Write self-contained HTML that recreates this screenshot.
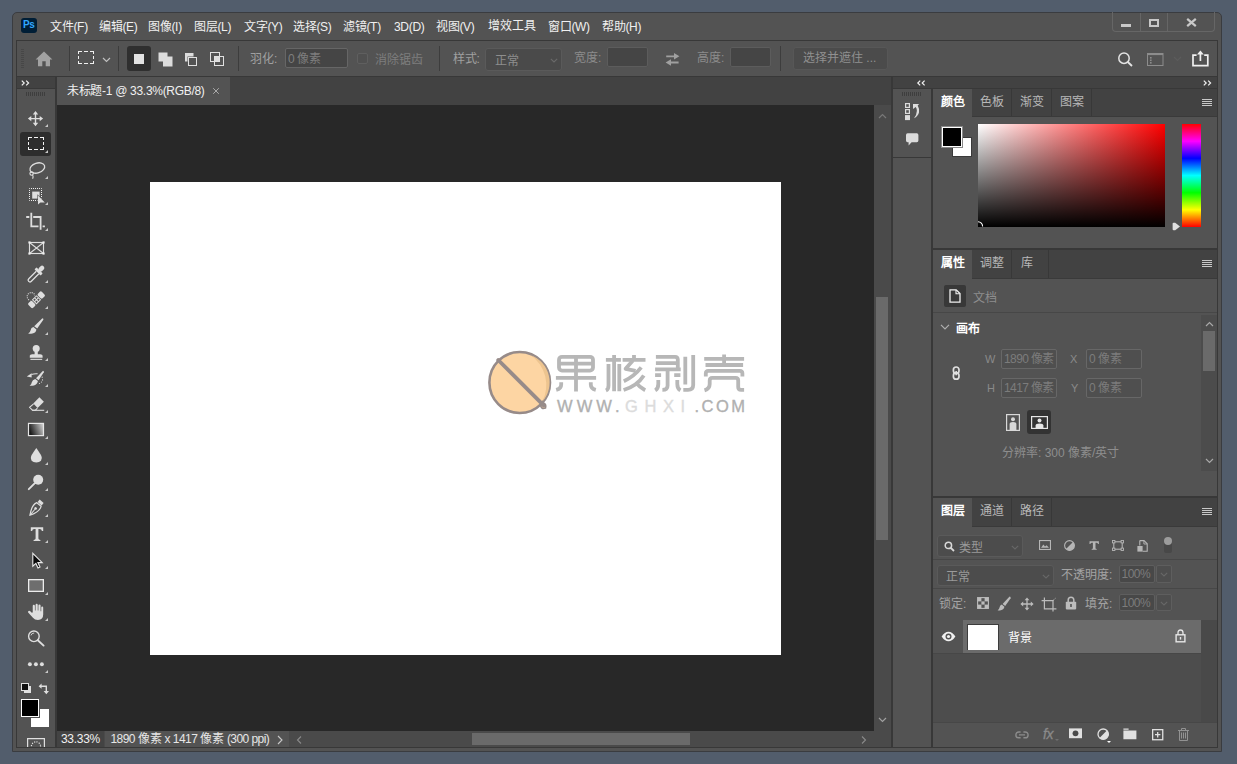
<!DOCTYPE html>
<html lang="zh-CN">
<head>
<meta charset="utf-8">
<title>Photoshop</title>
<style>
*{box-sizing:border-box;margin:0;padding:0}
html,body{width:1237px;height:764px;overflow:hidden}
body{background:#525d6c;font-family:"Liberation Sans",sans-serif;font-size:12px;color:#dddddd;position:relative}
.abs,.win *{position:absolute}
.win{position:absolute;left:12px;top:12px;width:1210px;height:740px;background:#535353;border:1px solid #3a3c40;border-radius:5px 5px 0 0}
/* coordinates inside .inner are page coordinates */
.inner{left:-13px;top:-13px;width:1237px;height:764px}
.t{white-space:nowrap;line-height:14px;height:14px}
.dk{background:#383838}
svg{overflow:visible}
/* menu */
.menu .t{color:#f0f0f0;letter-spacing:-0.3px}
/* options bar */
.opt{left:17px;top:41px;width:1200.2px;height:35px;background:#535353}
.lbl{color:#a0a0a0}
.dis{color:#7e7e7e}
.field{background:#454545;border:1px solid #666666;border-radius:2px}
.vsep{width:1px;background:#3d3d3d;top:46px;height:25px}
/* panels */
.tabbar{background:#424242}
.ptabs::after{content:"";position:absolute;left:39px;right:0;bottom:0;height:1px;background:#3a3a3a}
.tab{top:0;height:100%;color:#b8b8b8;text-align:center;line-height:27px;border-right:1px solid #383838}
.tab.on{background:#535353;color:#ffffff;font-weight:bold;border-right:none}
.panel{background:#535353}
.tool{left:26px;width:20px;height:20px}
.corner{width:0;height:0;border-left:3px solid transparent;border-bottom:3px solid #c8c8c8}
</style>
</head>
<body>
<div class="win"><div class="inner">

<!-- ===== MENU BAR ===== -->
<div class="menu" id="menubar" style="left:13px;top:13px;width:1209px;height:27px">
  <!-- Ps logo -->
  <div style="left:8px;top:4.8px;width:16.2px;height:15.2px;background:#001e36;border-radius:3px"></div>
  <div class="t" style="left:10px;top:5.4px;font-size:10px;font-weight:bold;color:#31a8ff;letter-spacing:-0.3px">Ps</div>
  <div class="t" style="left:37px;top:7px">文件(F)</div>
  <div class="t" style="left:86px;top:7px">编辑(E)</div>
  <div class="t" style="left:135px;top:7px">图像(I)</div>
  <div class="t" style="left:181px;top:7px">图层(L)</div>
  <div class="t" style="left:231px;top:7px">文字(Y)</div>
  <div class="t" style="left:280px;top:7px">选择(S)</div>
  <div class="t" style="left:330px;top:7px">滤镜(T)</div>
  <div class="t" style="left:381px;top:7px">3D(D)</div>
  <div class="t" style="left:423px;top:7px">视图(V)</div>
  <div class="t" style="left:475px;top:6px;letter-spacing:0.15px">增效工具</div>
  <div class="t" style="left:535px;top:7px">窗口(W)</div>
  <div class="t" style="left:589px;top:7px">帮助(H)</div>
  <!-- window buttons -->
  <div style="left:1099px;top:-1px;width:103px;height:20px;border:1px solid #666666;border-top:none;border-radius:0 0 4px 4px"></div>
  <div style="left:1127px;top:0;width:1px;height:18px;background:#666666"></div>
  <div style="left:1154px;top:0;width:1px;height:18px;background:#666666"></div>
  <div style="left:1108px;top:11px;width:10px;height:3px;background:#c8c8c8"></div>
  <div style="left:1136px;top:6px;width:10px;height:8px;border:2px solid #c8c8c8"></div>
  <svg style="left:1172.5px;top:5px" width="11" height="9" viewBox="0 0 11 9"><path d="M1.2 0.8 L9.8 8.2 M9.8 0.8 L1.2 8.2" stroke="#c8c8c8" stroke-width="2.2" fill="none"/></svg>
</div>

<!-- ===== OPTIONS BAR ===== -->
<div class="dk" style="left:16.3px;top:40px;width:1201.7px;height:707.8px"></div>
<div class="opt" id="optbar">
  <!-- coordinates relative to (17,41) -->
  <div style="left:4px;top:8px;width:3px;height:19px;background:repeating-linear-gradient(to bottom,#474747 0 1px,transparent 1px 2px)"></div>
  <!-- home -->
  <svg style="left:18px;top:10px" width="18" height="16" viewBox="0 0 18 16"><path d="M9 0.6 L0.6 8.6 H3 V15.2 H7.3 V10.2 H10.7 V15.2 H15 V8.6 H17.4 Z" fill="#a2a2a2"/></svg>
  <div class="vsep" style="left:52px;top:5px"></div>
  <!-- marquee icon -->
  <svg style="left:61px;top:10px" width="16" height="13" viewBox="0 0 16 13"><path d="M0 0.5 H4 M6 0.5 H10 M12 0.5 H16 M0 12.5 H4 M6 12.5 H10 M12 12.5 H16 M0.5 0 V3 M0.5 5 V8 M0.5 10 V13 M15.5 0 V3 M15.5 5 V8 M15.5 10 V13" fill="none" stroke="#f0f0f0" stroke-width="1"/></svg>
  <svg style="left:85px;top:16px" width="9" height="6" viewBox="0 0 9 6"><path d="M1 1 L4.5 4.5 L8 1" stroke="#c0c0c0" stroke-width="1.2" fill="none"/></svg>
  <div class="vsep" style="left:101px;top:5px"></div>
  <!-- selection mode buttons -->
  <div style="left:110px;top:5px;width:24px;height:25px;background:#2f2f2f;border-radius:3px"></div>
  <div style="left:117px;top:13px;width:10px;height:10px;background:#e2e2e2"></div>
  <svg style="left:141px;top:10.5px" width="15" height="15" viewBox="0 0 15 15"><path d="M0.5 0.5 H9.5 V4.5 H14.5 V14.5 H5 V9.5 H0.5 Z" fill="#dcdcdc"/></svg>
  <svg style="left:168px;top:12px" width="13" height="14" viewBox="0 0 13 14"><path d="M0 0 H8.5 V3.5 H2.5 V8.5 H0 Z" fill="#dcdcdc"/><rect x="3.5" y="4.5" width="8" height="8" fill="none" stroke="#e0e0e0" stroke-width="1"/></svg>
  <svg style="left:193px;top:11px" width="14" height="14" viewBox="0 0 14 14"><rect x="0.5" y="0.5" width="9" height="9" fill="none" stroke="#e0e0e0" stroke-width="1"/><rect x="4.5" y="4.5" width="9" height="9" fill="none" stroke="#e0e0e0" stroke-width="1"/><rect x="5" y="5" width="4" height="4" fill="#dcdcdc"/></svg>
  <div class="vsep" style="left:221px;top:5px"></div>
  <div class="t lbl" style="left:233px;top:11px">羽化:</div>
  <div class="field" style="left:268px;top:6.5px;width:63px;height:20.5px"></div>
  <div class="t dis" style="left:271px;top:10.5px;letter-spacing:-0.4px">0 像素</div>
  <div style="left:340px;top:12px;width:11px;height:11px;border:1px solid #5f5f5f;border-radius:2px;background:#505050"></div>
  <div class="t dis" style="left:357.5px;top:12px">消除锯齿</div>
  <div class="vsep" style="left:422px;top:5px"></div>
  <div class="t lbl" style="left:435.5px;top:11px">样式:</div>
  <div style="left:468px;top:6.5px;width:77px;height:23px;background:#4a4a4a;border:1px solid #5a5a5a;border-radius:3px"></div>
  <div class="t dis" style="left:478px;top:13px;color:#8e8e8e">正常</div>
  <svg style="left:533px;top:17px" width="8" height="5" viewBox="0 0 8 5"><path d="M0.8 0.8 L4 4 L7.2 0.8" stroke="#6a6a6a" stroke-width="1.1" fill="none"/></svg>
  <div class="t dis" style="left:557px;top:10px;color:#8c8c8c">宽度:</div>
  <div class="field" style="left:590px;top:6px;width:41px;height:20px;border-color:#5c5c5c"></div>
  <svg style="left:647.5px;top:11.5px" width="15" height="13" viewBox="0 0 15 13"><path d="M1.2 2.4 H9 V0 L14.4 3.3 L9 6.6 V4.2 H1.2 Z" fill="#a0a0a0"/><path d="M13.6 8.6 H6 V6.2 L0.6 9.5 L6 12.8 V10.4 H13.6 Z" fill="#a0a0a0"/></svg>
  <div class="t dis" style="left:680px;top:10px;color:#8c8c8c">高度:</div>
  <div class="field" style="left:713px;top:6px;width:41px;height:20px;border-color:#5c5c5c"></div>
  <div class="vsep" style="left:763px;top:5px"></div>
  <div style="left:776px;top:5.5px;width:95px;height:23px;background:#4b4b4b;border:1px solid #575757;border-radius:3px"></div>
  <div class="t" style="left:786px;top:10px;color:#909090">选择并遮住 ...</div>
  <!-- right icons -->
  <svg style="left:1100px;top:10px" width="16" height="16" viewBox="0 0 16 16"><circle cx="7" cy="7.2" r="5.2" fill="none" stroke="#e4e4e4" stroke-width="1.5"/><path d="M10.8 11 L15 15" stroke="#e4e4e4" stroke-width="1.8"/></svg>
  <svg style="left:1130px;top:12px" width="17" height="13" viewBox="0 0 17 13"><rect x="0.5" y="0.5" width="15.5" height="12" fill="none" stroke="#8c8c8c" stroke-width="1"/><rect x="0.5" y="0.5" width="15.5" height="1.6" fill="#8c8c8c"/><rect x="3" y="4" width="1.6" height="1.6" fill="#8c8c8c"/><rect x="3" y="6.5" width="1.6" height="1.6" fill="#8c8c8c"/><rect x="3" y="9" width="1.6" height="1.6" fill="#8c8c8c"/></svg>
  <svg style="left:1156px;top:15px" width="9" height="6" viewBox="0 0 9 6"><path d="M1 1 L4.5 4.5 L8 1" stroke="#5c5c5c" stroke-width="1.2" fill="none"/></svg>
  <svg style="left:1175px;top:9px" width="17" height="17" viewBox="0 0 17 17"><path d="M4.6 5.2 H1 V15.6 H15.8 V5.2 H12.2" fill="none" stroke="#f0f0f0" stroke-width="1.7"/><path d="M8.4 11 V2.5" stroke="#f0f0f0" stroke-width="1.7"/><path d="M5 4.4 L8.4 0.6 L11.8 4.4 Z" fill="#f0f0f0"/></svg>
</div>

<!-- ===== TOOLBAR ===== -->
<div id="toolbar">
  <div style="left:17px;top:77px;width:38px;height:11px;background:#424242"></div>
  <svg style="left:21px;top:80px" width="9" height="6" viewBox="0 0 9 6"><path d="M0.8 0.6 L3.2 3 L0.8 5.4 M5.2 0.6 L7.6 3 L5.2 5.4" stroke="#f0f0f0" stroke-width="1.2" fill="none"/></svg>
  <div class="panel" style="left:17px;top:89px;width:38px;height:658px"></div>
  <div style="left:26px;top:92px;width:19px;height:4px;background:repeating-linear-gradient(to right,#3e3e3e 0 1px,transparent 1px 2px)"></div>
  <!-- active tool bg -->
  <div style="left:20px;top:132px;width:31px;height:24px;background:#2d2d2d;border-radius:3px"></div>
  <!--TOOLS_BEGIN-->
  <svg class="tool" style="top:108px" width="20" height="20" viewBox="0 0 20 20"><path d="M9.5 3 L12.2 6.4 H6.8 Z M9.5 18.2 L12.2 14.8 H6.8 Z M1.9 10.6 L5.3 7.9 V13.3 Z M17.1 10.6 L13.7 7.9 V13.3 Z" fill="#dedede"/><path d="M9.5 5.5 V15.7 M4.4 10.6 H14.6" stroke="#dedede" stroke-width="1.4" fill="none"/></svg><div class="corner" style="left:45px;top:124px"></div>
  <svg class="tool" style="top:134px" width="20" height="20" viewBox="0 0 20 20"><path transform="translate(2 3)" d="M0 0.5 H4 M6 0.5 H10 M12 0.5 H16 M0 12.5 H4 M6 12.5 H10 M12 12.5 H16 M0.5 0 V3 M0.5 5 V8 M0.5 10 V13 M15.5 0 V3 M15.5 5 V8 M15.5 10 V13" fill="none" stroke="#f4f4f4" stroke-width="1"/></svg><div class="corner" style="left:45px;top:150px"></div>
  <svg class="tool" style="top:160px" width="20" height="20" viewBox="0 0 20 20"><ellipse cx="11.3" cy="8" rx="7.6" ry="4.9" transform="rotate(-18 11.3 8)" fill="none" stroke="#dedede" stroke-width="1.3"/><circle cx="5.6" cy="13.6" r="1.7" fill="none" stroke="#dedede" stroke-width="1.1"/><path d="M6.6 15 Q7.6 16.8 6.6 18.8" fill="none" stroke="#dedede" stroke-width="1.1"/></svg><div class="corner" style="left:45px;top:176px"></div>
  <svg class="tool" style="top:186px" width="20" height="20" viewBox="0 0 20 20"><rect x="3.5" y="2.5" width="12" height="12" fill="none" stroke="#f0f0f0" stroke-width="1" stroke-dasharray="1 1" stroke-dashoffset="0.5"/><rect x="6.2" y="5.6" width="7.4" height="7" fill="#dedede"/><path d="M12 9.6 L12 18.6 L14.4 16.4 L18.8 16.4 Z" fill="#dedede" stroke="#535353" stroke-width="1.2" paint-order="stroke"/></svg><div class="corner" style="left:45px;top:202px"></div>
  <svg class="tool" style="top:212px" width="20" height="20" viewBox="0 0 20 20"><path d="M0.2 5 H3.3 M7.2 5 H14.6 V17.8 M5.3 0.8 V14.4 H12.5 M16.6 14.4 H18.9" fill="none" stroke="#dedede" stroke-width="1.8"/></svg><div class="corner" style="left:45px;top:228px"></div>
  <svg class="tool" style="top:238px" width="20" height="20" viewBox="0 0 20 20"><rect x="3.5" y="4.5" width="14" height="11" fill="none" stroke="#dedede" stroke-width="1.15"/><path d="M3.5 4.5 L17.5 15.5 M17.5 4.5 L3.5 15.5" stroke="#dedede" stroke-width="1.05"/><rect x="2.4" y="3.4" width="2.1" height="2.1" fill="#f0f0f0"/><rect x="16.5" y="3.4" width="2.1" height="2.1" fill="#f0f0f0"/><rect x="2.4" y="14.5" width="2.1" height="2.1" fill="#f0f0f0"/><rect x="16.5" y="14.5" width="2.1" height="2.1" fill="#f0f0f0"/></svg>
  <svg class="tool" style="top:264px" width="20" height="20" viewBox="0 0 20 20"><g transform="rotate(45 10 10)"><rect x="7.8" y="-0.8" width="4.4" height="6.4" rx="2.1" fill="#dedede"/><rect x="5.7" y="4.9" width="8.6" height="2.9" rx="0.5" fill="#dedede"/><path d="M8.2 7.8 V18.4 Q8.2 20.4 10 20.4 Q11.8 20.4 11.8 18.4 V7.8" fill="none" stroke="#dedede" stroke-width="1.3"/></g></svg><div class="corner" style="left:45px;top:280px"></div>
  <svg class="tool" style="top:290px" width="20" height="20" viewBox="0 0 20 20"><circle cx="5.2" cy="6.6" r="4" fill="none" stroke="#dedede" stroke-width="1.1" stroke-dasharray="1 1.1"/><g transform="translate(-0.5 -1.2) rotate(-45 11 11)"><rect x="0.8" y="7" width="20.4" height="8" fill="#535353"/><rect x="1.6" y="7.7" width="5.4" height="6.6" rx="1.4" fill="#dedede"/><rect x="15" y="7.7" width="5.4" height="6.6" rx="1.4" fill="#dedede"/><rect x="7.7" y="7.7" width="6.6" height="6.6" fill="#dedede"/><rect x="8.7" y="8.7" width="1.8" height="1.8" fill="#535353"/><rect x="11.5" y="8.7" width="1.8" height="1.8" fill="#535353"/><rect x="8.7" y="11.5" width="1.8" height="1.8" fill="#535353"/><rect x="11.5" y="11.5" width="1.8" height="1.8" fill="#535353"/></g></svg><div class="corner" style="left:45px;top:306px"></div>
  <svg class="tool" style="top:316px" width="20" height="20" viewBox="0 0 20 20"><path d="M16.4 2.2 Q17.8 2.4 17.3 3.8 L11.2 12.6 L8.2 10.2 Z" fill="#dedede"/><path d="M7.4 10.9 L10.4 13.4 Q10 16.8 6.4 17.5 Q4 18 2.2 17.6 Q4.4 16.2 4.6 14.2 Q5 11.4 7.4 10.9 Z" fill="#dedede"/></svg><div class="corner" style="left:45px;top:332px"></div>
  <svg class="tool" style="top:342px" width="20" height="20" viewBox="0 0 20 20"><circle cx="10.2" cy="6.4" r="3.5" fill="#dedede"/><rect x="8.6" y="8.6" width="3.2" height="4.4" fill="#dedede"/><path d="M6.2 12.2 H14.2 Q16.6 12.2 16.6 13.8 V15.7 H3.8 V13.8 Q3.8 12.2 6.2 12.2 Z" fill="#dedede"/><rect x="4.4" y="16.8" width="11.8" height="1.1" fill="#dedede"/></svg><div class="corner" style="left:45px;top:358px"></div>
  <svg class="tool" style="top:368px" width="20" height="20" viewBox="0 0 20 20"><path d="M17 2.8 Q18.2 3 17.8 4.2 L12.6 12.2 L10 10.2 Z" fill="#dedede"/><path d="M9.2 10.9 L11.9 13 Q11.4 16.4 8 17.4 Q5.6 18 3.6 17.8 Q5.6 16.2 5.8 14.2 Q6.4 11.6 9.2 10.9 Z" fill="#dedede"/><path d="M0.8 8.4 L5.6 5.2 V9.4 Z" fill="#dedede"/><path d="M5.4 6.6 Q8.4 5.4 11.6 5.8" fill="none" stroke="#dedede" stroke-width="1.1"/><circle cx="16.2" cy="9.2" r="0.6" fill="#dedede"/><circle cx="16.5" cy="11.9" r="0.6" fill="#dedede"/><circle cx="15.5" cy="14" r="0.6" fill="#dedede"/><circle cx="13.5" cy="15.5" r="0.6" fill="#dedede"/></svg><div class="corner" style="left:45px;top:384px"></div>
  <svg class="tool" style="top:394px" width="20" height="20" viewBox="0 0 20 20"><path d="M13.4 3.3 L17.9 7.8 L11.6 13.9 L7.3 9.6 Z" fill="#dedede"/><path d="M7.6 9.9 L3.6 13.3 L6.4 16.2 H9.4 L11.4 14.2" fill="none" stroke="#dedede" stroke-width="1.1"/><path d="M6.2 16.3 H18.2" stroke="#dedede" stroke-width="1.1"/></svg><div class="corner" style="left:45px;top:410px"></div>
  <svg class="tool" style="top:420px" width="20" height="20" viewBox="0 0 20 20"><defs><linearGradient id="gr" x1="0" y1="0.3" x2="1" y2="0"><stop offset="0" stop-color="#1c1c1c"/><stop offset="1" stop-color="#d8d8d8"/></linearGradient></defs><rect x="2.5" y="3.4" width="15" height="12.2" fill="url(#gr)" stroke="#e6e6e6" stroke-width="1.2"/></svg><div class="corner" style="left:45px;top:436px"></div>
  <svg class="tool" style="top:446px" width="20" height="20" viewBox="0 0 20 20"><path d="M10.3 2 Q14.2 7.6 15.4 10 Q16.6 12.6 15 14.8 Q13.4 16.6 10.3 16.6 Q7.2 16.6 5.6 14.8 Q4 12.6 5.2 10 Q6.4 7.6 10.3 2 Z" fill="#dedede"/></svg><div class="corner" style="left:45px;top:462px"></div>
  <svg class="tool" style="top:472px" width="20" height="20" viewBox="0 0 20 20"><circle cx="12.2" cy="7.8" r="5" fill="#dedede"/><path d="M8.6 11.4 L2.8 17.2" stroke="#dedede" stroke-width="1.9" stroke-linecap="round"/></svg><div class="corner" style="left:45px;top:488px"></div>
  <svg class="tool" style="top:498px" width="20" height="20" viewBox="0 0 20 20"><g transform="rotate(40 10 10)"><path d="M7.4 1.2 H12.6 V4.4 H7.4 Z" fill="#dedede"/><path d="M7.2 5.4 H12.8 Q15.4 10.4 10 19.4 Q4.6 10.4 7.2 5.4 Z" fill="none" stroke="#dedede" stroke-width="1.2"/><path d="M10 18.6 V11.6" stroke="#dedede" stroke-width="1"/><circle cx="10" cy="10.6" r="1.3" fill="#dedede"/></g></svg><div class="corner" style="left:45px;top:514px"></div>
  <svg class="tool" style="top:524px" width="20" height="20" viewBox="0 0 20 20"><path d="M4.8 3.2 H17.2 V7 H15.9 Q15.7 4.9 13.6 4.9 H12.4 V14.6 Q12.4 15.8 14.4 15.9 V17 H7.6 V15.9 Q9.6 15.8 9.6 14.6 V4.9 H8.4 Q6.3 4.9 6.1 7 H4.8 Z" fill="#dedede"/></svg><div class="corner" style="left:45px;top:540px"></div>
  <svg class="tool" style="top:550px" width="20" height="20" viewBox="0 0 20 20"><path d="M6.8 3.4 V16.2 L9.9 13.4 L12 18 L14 17.1 L11.9 12.6 H16.2 Z" fill="#0a0a0a" stroke="#e8e8e8" stroke-width="1.1" stroke-linejoin="miter"/></svg><div class="corner" style="left:45px;top:566px"></div>
  <svg class="tool" style="top:576px" width="20" height="20" viewBox="0 0 20 20"><rect x="2.65" y="3.65" width="14.7" height="11.7" fill="#6e6e6e" stroke="#ececec" stroke-width="1.3"/></svg><div class="corner" style="left:45px;top:592px"></div>
  <svg class="tool" style="top:602px" width="20" height="20" viewBox="0 0 20 20"><path transform="translate(-0.9 0) scale(1.09 1)" d="M7 10 V4 Q7 2.8 8 2.8 Q9 2.8 9 4 V8.6 H9.6 V2.9 Q9.6 1.8 10.6 1.8 Q11.6 1.8 11.6 2.9 V8.6 H12.2 V3.6 Q12.2 2.6 13.2 2.6 Q14.2 2.6 14.2 3.6 V9.2 H14.8 V5.6 Q14.8 4.6 15.7 4.6 Q16.6 4.6 16.6 5.6 V12.6 Q16.6 18 11.8 18 Q8.8 18 7.2 15.8 L2.8 10.4 Q2.2 9.4 3.2 8.9 Q4.2 8.6 5 9.4 L6.4 11 Z" fill="#dedede"/></svg><div class="corner" style="left:45px;top:618px"></div>
  <svg class="tool" style="top:628px" width="20" height="20" viewBox="0 0 20 20"><circle cx="7.9" cy="8.3" r="5.3" fill="none" stroke="#dedede" stroke-width="1.4"/><path d="M11.8 12.2 L17.6 17.6" stroke="#dedede" stroke-width="1.9" stroke-linecap="round"/><path d="M5 7.4 A3.2 3.2 0 0 1 8.2 5" fill="none" stroke="#dedede" stroke-width="0.9"/></svg>
  <svg class="tool" style="top:654px" width="20" height="20" viewBox="0 0 20 20"><circle cx="3.9" cy="10.2" r="1.95" fill="#dedede"/><circle cx="9.9" cy="10.2" r="1.95" fill="#dedede"/><circle cx="15.9" cy="10.2" r="1.95" fill="#dedede"/></svg><div class="corner" style="left:45px;top:670px"></div>
  <div style="left:24px;top:686px;width:7px;height:7px;background:#e0e0e0"></div><div style="left:21px;top:683px;width:8px;height:8px;background:#101010;border:1px solid #e0e0e0"></div>
  <svg style="left:37.5px;top:682.5px" width="12" height="12" viewBox="0 0 12 12"><path d="M0.6 3.2 L3.6 0.6 V2.5 H9 V8 H11 L8.3 11.2 L5.6 8 H7.6 V3.9 H3.6 V5.8 Z" fill="#dedede"/></svg>
  <div style="left:31px;top:709px;width:18px;height:18px;background:#ffffff"></div>
  <div style="left:20.6px;top:698.8px;width:18.6px;height:18.4px;background:#000000;border:1px solid #ffffff;box-shadow:0 0 0 1px #535353"></div>
  <svg style="left:27px;top:737.8px;overflow:hidden" width="18" height="9.2" viewBox="0 0 18 9.2"><path d="M0.6 10 V0.6 H17.4 V10" fill="none" stroke="#e0e0e0" stroke-width="1.2"/><circle cx="9" cy="8.4" r="4.6" fill="none" stroke="#e8e8e8" stroke-width="1.2" stroke-dasharray="1.1 1.3"/></svg>
  <!--TOOLS_END-->
</div>

<!-- ===== DOCUMENT ===== -->
<div id="doc">
  <!-- tab bar -->
  <div class="tabbar" style="left:57px;top:77px;width:834px;height:28.2px"></div>
  <div class="panel" style="left:57px;top:77px;width:173px;height:28.2px"></div>
  <div class="t" style="left:67px;top:84px;color:#f0f0f0;letter-spacing:-0.3px">未标题-1 @ 33.3%(RGB/8)</div>
  <svg style="left:212px;top:87.3px" width="8" height="8" viewBox="0 0 8 8"><path d="M1.2 1.2 L6.8 6.8 M6.8 1.2 L1.2 6.8" stroke="#b4b4b4" stroke-width="0.9" fill="none"/></svg>
  <!-- viewport -->
  <div style="left:57px;top:105.2px;width:817px;height:625.8px;background:#282828"></div>
  <div style="left:150px;top:182px;width:631px;height:473px;background:#ffffff"></div>
  <svg style="left:480px;top:340px" width="280" height="85" viewBox="480 340 280 85">
    <!-- fruit -->
    <path d="M542.6 402.6 Q546.6 403.6 545.4 408 Q541 409.6 540.6 405 Z" fill="#fdd5a3" stroke="#978b89" stroke-width="1.8" stroke-linejoin="round"/>
    <ellipse cx="519.7" cy="382.5" rx="30.3" ry="30.5" fill="#fdd5a3" stroke="#978b89" stroke-width="2.6"/>
    <path d="M531 355.2 A29.2 29.2 0 0 1 542.5 401.5 A37 37 0 0 0 531 355.2 Z" fill="#edc48f"/>
    <path d="M498.2 360 L543.6 405.4" stroke="#978b89" stroke-width="3.8" stroke-linecap="round"/>
    <g fill="none" stroke="#b7b7b7" stroke-width="3.8" stroke-linejoin="round">
      <!-- 果 -->
      <rect x="559" y="356.8" width="34" height="13.8" rx="3"/>
      <path d="M559 363.7 H593 M576 355 V391.4 M555.9 377.8 H596.1"/>
      <path d="M561.2 382.2 V384.4 Q561.2 388.6 556.2 389.9 M590.8 382.2 V384.4 Q590.8 388.6 595.8 389.9"/>
      <!-- 核 -->
      <path d="M605.9 359.8 H620.9 M614.1 354.9 V391.3 M619.3 364 V391.3 M608.5 364 V385.4 Q608.5 389.4 605.9 390.6"/>
      <path d="M634 354.9 V359 M622.6 359.8 H645.5"/>
      <path d="M632.9 360.6 L625.6 368.8 L635.6 370.9"/>
      <path d="M641.2 367.4 Q634 376.6 623.8 381.2"/>
      <path d="M643.8 375.4 Q637.4 385.6 623.6 390"/>
      <path d="M635.7 382.4 Q639.6 387.4 645.2 390.2"/>
      <!-- 剥 -->
      <path d="M655.9 356.8 H675 Q677.8 356.8 677.8 359.6 V369.3 M655.9 363.1 H677.8 M655.1 369.3 H680.7"/>
      <path d="M667.6 369.3 V385.4 Q667.6 389.8 662.4 389.8"/>
      <path d="M655.1 375.2 H661.1 M674.2 375.2 H680.4"/>
      <path d="M658.3 380 V384 Q658.3 388.6 655.2 390.4 M677.3 380 V384 Q677.3 388.6 680.4 390.4"/>
      <path d="M685.3 356.8 V384.6 M693.2 354.9 V385 Q693.2 389.9 688 389.9 H683.3"/>
      <!-- 壳 -->
      <path d="M724.1 354.5 V365 M704.2 358.8 H744.1 M705.5 365 H743.1"/>
      <path d="M705.8 376.5 V373.5 Q705.8 370.9 708.4 370.9 H739.8 Q742.4 370.9 742.4 373.5 V376.5"/>
      <path d="M704.5 390.3 Q709.7 388.8 709.7 384 V380.4 Q709.7 377.8 712.3 377.8 H735.6 Q738.2 377.8 738.2 380.4 V387 Q738.2 389.9 741 389.9 H744.1"/>
    </g>
  </svg>
  <div class="t" id="w1" style="left:557px;top:397px;font-size:16.5px;line-height:18px;height:18px;letter-spacing:4.1px;color:#b0b0b0;-webkit-text-stroke:0.35px #b0b0b0">WWW.</div>
  <div class="t" id="w2" style="left:625px;top:397px;font-size:16.5px;line-height:18px;height:18px;letter-spacing:6.6px;color:#dcdcdc;-webkit-text-stroke:0.35px #dcdcdc">GHXI</div>
  <div class="t" id="w3" style="left:694.5px;top:397px;font-size:16.5px;line-height:18px;height:18px;letter-spacing:2.5px;color:#b0b0b0;-webkit-text-stroke:0.35px #b0b0b0">.COM</div>
  <!-- v scrollbar -->
  <div style="left:874px;top:105.2px;width:16.5px;height:641.8px;background:#4a4a4a"></div>
  <div style="left:876px;top:297px;width:12px;height:243px;background:#6a6a6a"></div>
  <svg style="left:878px;top:113px" width="9" height="6" viewBox="0 0 9 6"><path d="M1 5 L4.5 1.5 L8 5" stroke="#787878" stroke-width="1.2" fill="none"/></svg>
  <svg style="left:878px;top:717px" width="9" height="6" viewBox="0 0 9 6"><path d="M1 1 L4.5 4.5 L8 1" stroke="#a0a0a0" stroke-width="1.2" fill="none"/></svg>
  <!-- status bar -->
  <div style="left:57px;top:731px;width:817px;height:16px;background:#4a4a4a"></div>
  <div style="left:57px;top:731px;width:47px;height:16px;background:#434343"></div>
  <div class="t" style="left:61px;top:732px;color:#f0f0f0;letter-spacing:-0.3px">33.33%</div>
  <div class="panel" style="left:105px;top:731px;width:184px;height:16px"></div>
  <div class="t" style="left:110.5px;top:732px;color:#e6e6e6;letter-spacing:-0.55px">1890 <span style="position:static;letter-spacing:0">像素</span> x 1417 <span style="position:static;letter-spacing:0">像素</span> (300 ppi)</div>
  <svg style="left:277px;top:735px" width="6" height="10" viewBox="0 0 6 10"><path d="M1 1 L5 5 L1 9" stroke="#c8c8c8" stroke-width="1.1" fill="none"/></svg>
  <svg style="left:296px;top:735px" width="6" height="10" viewBox="0 0 6 10"><path d="M5 1.5 L1.5 5 L5 8.5" stroke="#8a8a8a" stroke-width="1.1" fill="none"/></svg>
  <svg style="left:861px;top:735px" width="6" height="10" viewBox="0 0 6 10"><path d="M1 1.5 L4.5 5 L1 8.5" stroke="#8a8a8a" stroke-width="1.1" fill="none"/></svg>
  <div style="left:472px;top:733px;width:218px;height:12px;background:#6a6a6a"></div>
</div>

<!-- ===== DOCK ===== -->
<div id="dock">
  <!-- top strip -->
  <div style="left:893px;top:77px;width:324.2px;height:11px;background:#424242"></div>
  <svg style="left:916.5px;top:80px" width="9" height="6" viewBox="0 0 9 6"><path d="M3.2 0.6 L0.8 3 L3.2 5.4 M7.6 0.6 L5.2 3 L7.6 5.4" stroke="#f0f0f0" stroke-width="1.2" fill="none"/></svg>
  <svg style="left:1203px;top:80px" width="9" height="6" viewBox="0 0 9 6"><path d="M0.8 0.6 L3.2 3 L0.8 5.4 M5.2 0.6 L7.6 3 L5.2 5.4" stroke="#f0f0f0" stroke-width="1.2" fill="none"/></svg>
  <!-- icon column -->
  <div class="panel" style="left:893px;top:89px;width:38px;height:68px"></div>
  <div class="panel" style="left:893px;top:158px;width:38px;height:589px"></div>
  <div style="left:902px;top:92px;width:19px;height:4px;background:repeating-linear-gradient(to right,#3e3e3e 0 1px,transparent 1px 2px)"></div>
  <!-- history -->
  <svg style="left:904px;top:102px" width="17" height="19" viewBox="0 0 17 19"><rect x="1.6" y="1.6" width="3.8" height="3.8" fill="none" stroke="#dcdcdc" stroke-width="1.2"/><rect x="1.6" y="7.6" width="3.8" height="3.8" fill="none" stroke="#dcdcdc" stroke-width="1.2"/><rect x="1" y="13.1" width="5" height="5" fill="#dcdcdc"/><path d="M9 2.1 H15.1 L13.7 3.6 Q15.7 7 15 10.6 Q14 14.4 10 16.3 Q12.8 12.6 12.9 8.8 Q12.9 6.4 11.7 5 L9 7 Z" fill="#dcdcdc"/></svg>
  <!-- comment -->
  <svg style="left:905.5px;top:133px" width="13" height="13" viewBox="0 0 13 13"><path d="M1.6 0.3 H10.8 Q12.4 0.3 12.4 1.9 V7.6 Q12.4 9.2 10.8 9.2 H5.6 L2.6 12.4 V9.2 H1.6 Q0 9.2 0 7.6 V1.9 Q0 0.3 1.6 0.3 Z" fill="#dcdcdc"/></svg>

  <!-- ===== COLOR PANEL ===== -->
  <div class="tabbar ptabs" style="left:933px;top:88.7px;width:284.2px;height:28px">
    <div class="tab on" style="left:0;width:39px">颜色</div>
    <div class="tab" style="left:39px;width:40px">色板</div>
    <div class="tab" style="left:79px;width:40px">渐变</div>
    <div class="tab" style="left:119px;width:40px">图案</div>
    <div style="left:269px;top:10px;width:10px;height:8px;background:repeating-linear-gradient(to bottom,#c8c8c8 0 1px,transparent 1px 2px)"></div>
  </div>
  <div class="panel" style="left:933px;top:116.5px;width:284.2px;height:131.7px"></div>
  <!-- bg swatch / fg swatch -->
  <div style="left:952px;top:137px;width:20px;height:20px;background:#ffffff;border:1px solid #3a3a3a"></div>
  <div style="left:941px;top:126px;width:22px;height:22px;background:#000000;border:1px solid #8a8a8a;box-shadow:inset 0 0 0 1px #ffffff"></div>
  <!-- color field -->
  <div style="left:978px;top:124px;width:187px;height:103px;background:linear-gradient(to bottom,rgba(0,0,0,0),#000000),linear-gradient(to right,#ffffff,#ff0000)"></div>
  <svg style="left:977px;top:221px" width="7" height="7" viewBox="0 0 7 7"><path d="M1 0.8 A4.6 4.6 0 0 1 5.6 5.6" fill="none" stroke="#ffffff" stroke-width="1.1"/></svg>
  <!-- hue strip -->
  <div style="left:1182px;top:124px;width:19px;height:103px;background:linear-gradient(to bottom,#ff0000 0%,#ff00ff 16.7%,#0000ff 33.3%,#00ffff 50%,#00ff00 66.7%,#ffff00 83.3%,#ff0000 100%)"></div>
  <svg style="left:1172px;top:222px" width="9" height="9" viewBox="0 0 9 9"><path d="M1.6 0.8 H3.2 L8 4.5 L3.2 8.2 H1.6 Q0.6 8.2 0.6 7.2 V1.8 Q0.6 0.8 1.6 0.8 Z" fill="#e0e0e0"/></svg>

  <!-- ===== PROPERTIES PANEL ===== -->
  <div class="tabbar ptabs" style="left:933px;top:250.3px;width:284.2px;height:28.3px">
    <div class="tab on" style="left:0;width:39px">属性</div>
    <div class="tab" style="left:39px;width:40px">调整</div>
    <div class="tab" style="left:79px;width:37px;text-align:left;padding-left:9px">库</div>
    <div style="left:269px;top:10px;width:10px;height:8px;background:repeating-linear-gradient(to bottom,#c8c8c8 0 1px,transparent 1px 2px)"></div>
  </div>
  <div class="panel" style="left:933px;top:278.5px;width:284.2px;height:217.6px"></div>
  <!-- doc row -->
  <div style="left:944px;top:285px;width:22px;height:22px;background:#383838;border-radius:2px"></div>
  <svg style="left:949px;top:289px" width="12" height="14" viewBox="0 0 12 14"><path d="M1 0.8 H7.2 L11 4.6 V13.2 H1 Z" fill="none" stroke="#f0f0f0" stroke-width="1.3"/><path d="M7 1 V4.8 H10.8" fill="none" stroke="#f0f0f0" stroke-width="1.1"/></svg>
  <div class="t" style="left:973px;top:290.7px;color:#8e8e8e">文档</div>
  <div style="left:933px;top:312px;width:284.2px;height:1px;background:#474747"></div>
  <svg style="left:939.5px;top:323.5px" width="10" height="6" viewBox="0 0 10 6"><path d="M1 0.8 L5 4.8 L9 0.8" stroke="#b0b0b0" stroke-width="1.2" fill="none"/></svg>
  <div class="t" style="left:955.7px;top:321.5px;color:#ffffff;font-weight:bold">画布</div>
  <!-- link -->
  <svg style="left:952px;top:366.3px" width="9" height="15" viewBox="0 0 9 15"><rect x="1.4" y="1" width="5.6" height="6.6" rx="2.8" fill="none" stroke="#e0e0e0" stroke-width="1.7"/><rect x="1.4" y="6.6" width="5.6" height="6.6" rx="2.8" fill="none" stroke="#e0e0e0" stroke-width="1.7"/><path d="M4.2 5 V9.2" stroke="#e0e0e0" stroke-width="1.5"/></svg>
  <div class="t" style="left:985px;top:352px;color:#8a8a8a;font-size:11px">W</div>
  <div class="field" style="left:1001px;top:349px;width:56px;height:20px;background:#4f4f4f;border-color:#676767"></div>
  <div class="t" style="left:1004px;top:352px;color:#7c7c7c;letter-spacing:-0.6px">1890 像素</div>
  <div class="t" style="left:1070px;top:352px;color:#8a8a8a;font-size:11px">X</div>
  <div class="field" style="left:1086px;top:349px;width:56px;height:20px;background:#4f4f4f;border-color:#676767"></div>
  <div class="t" style="left:1089px;top:352px;color:#7c7c7c;letter-spacing:-0.4px">0 像素</div>
  <div class="t" style="left:987px;top:381px;color:#8a8a8a;font-size:11px">H</div>
  <div class="field" style="left:1001px;top:378px;width:56px;height:20px;background:#4f4f4f;border-color:#676767"></div>
  <div class="t" style="left:1004px;top:381px;color:#7c7c7c;letter-spacing:-0.6px">1417 像素</div>
  <div class="t" style="left:1071px;top:381px;color:#8a8a8a;font-size:11px">Y</div>
  <div class="field" style="left:1086px;top:378px;width:56px;height:20px;background:#4f4f4f;border-color:#676767"></div>
  <div class="t" style="left:1089px;top:381px;color:#7c7c7c;letter-spacing:-0.4px">0 像素</div>
  <!-- orientation -->
  <svg style="left:1006px;top:414px" width="14" height="17" viewBox="0 0 14 17"><rect x="0.6" y="0.6" width="12.8" height="15.8" fill="none" stroke="#d8d8d8" stroke-width="1.2"/><circle cx="7" cy="5.2" r="2" fill="#d8d8d8"/><path d="M3.6 16 V10 Q3.6 8 7 8 Q10.4 8 10.4 10 V16 Z" fill="#d8d8d8"/></svg>
  <div style="left:1027px;top:410px;width:24px;height:24px;background:#333333;border-radius:3px"></div>
  <svg style="left:1031px;top:416px" width="17" height="13" viewBox="0 0 17 13"><rect x="0.6" y="0.6" width="15.8" height="11.8" fill="none" stroke="#e6e6e6" stroke-width="1.2"/><circle cx="8.5" cy="4.6" r="2" fill="#e6e6e6"/><path d="M4.6 12 V9.6 Q4.6 7.4 8.5 7.4 Q12.4 7.4 12.4 9.6 V12 Z" fill="#e6e6e6"/></svg>
  <div class="t" style="left:1002px;top:446px;color:#8e8e8e">分辨率: 300 像素/英寸</div>
  <!-- scrollbar -->
  <div style="left:1201px;top:314.5px;width:16.2px;height:156.3px;background:#4c4c4c"></div>
  <div style="left:1203px;top:331px;width:12px;height:40px;background:#6a6a6a"></div>
  <svg style="left:1205px;top:321px" width="9" height="6" viewBox="0 0 9 6"><path d="M1 5 L4.5 1.5 L8 5" stroke="#a8a8a8" stroke-width="1.2" fill="none"/></svg>
  <svg style="left:1205px;top:458px" width="9" height="6" viewBox="0 0 9 6"><path d="M1 1 L4.5 4.5 L8 1" stroke="#a8a8a8" stroke-width="1.2" fill="none"/></svg>

  <!-- ===== LAYERS PANEL ===== -->
  <div class="tabbar ptabs" style="left:933px;top:498.3px;width:284.2px;height:28.3px">
    <div class="tab on" style="left:0;width:39px">图层</div>
    <div class="tab" style="left:39px;width:40px">通道</div>
    <div class="tab" style="left:79px;width:40px">路径</div>
    <div style="left:269px;top:10px;width:10px;height:8px;background:repeating-linear-gradient(to bottom,#c8c8c8 0 1px,transparent 1px 2px)"></div>
  </div>
  <div class="panel" style="left:933px;top:526.5px;width:284.2px;height:220.5px"></div>
  <!-- filter row -->
  <div style="left:937px;top:535px;width:86px;height:22px;background:#4c4c4c;border:1px solid #5a5a5a;border-radius:3px"></div>
  <svg style="left:944px;top:541px" width="11" height="11" viewBox="0 0 11 11"><circle cx="4.4" cy="4.4" r="3.2" fill="none" stroke="#d8d8d8" stroke-width="1.5"/><path d="M6.8 6.8 L10 10" stroke="#d8d8d8" stroke-width="1.8"/></svg>
  <div class="t" style="left:959px;top:541px;color:#9a9a9a">类型</div>
  <svg style="left:1011px;top:545px" width="8" height="5" viewBox="0 0 8 5"><path d="M0.8 0.8 L4 4 L7.2 0.8" stroke="#686868" stroke-width="1.1" fill="none"/></svg>
  <svg style="left:1039px;top:540px" width="12" height="10" viewBox="0 0 12 10"><rect x="0.55" y="0.55" width="10.9" height="8.9" fill="none" stroke="#b6b6b6" stroke-width="1.1"/><path d="M2 7.8 L4.4 4.6 L6 6.6 L7.6 5.2 L10 7.8 Z" fill="#b6b6b6"/></svg>
  <svg style="left:1064px;top:540px" width="11" height="11" viewBox="0 0 11 11"><circle cx="5.5" cy="5.5" r="4.9" fill="none" stroke="#b6b6b6" stroke-width="1.1"/><path d="M9 2 A4.9 4.9 0 0 1 2 9 Z" fill="#b6b6b6"/></svg>
  <svg style="left:1089px;top:541px" width="10.4" height="9" viewBox="0 0 12 10.4"><path d="M0.6 0.4 H11.4 V3.6 H10.4 Q10.2 2 8.6 2 H7.5 V8.4 Q7.5 9.2 8.9 9.3 V10.2 H3.1 V9.3 Q4.5 9.2 4.5 8.4 V2 H3.4 Q1.8 2 1.6 3.6 H0.6 Z" fill="#b6b6b6"/></svg>
  <svg style="left:1112px;top:540px" width="12" height="11" viewBox="0 0 12 11"><rect x="1.8" y="1.8" width="8.4" height="7.4" fill="none" stroke="#b6b6b6" stroke-width="1.1"/><rect x="0.5" y="0.5" width="2.4" height="2.4" fill="#535353" stroke="#b6b6b6" stroke-width="0.9"/><rect x="9.1" y="0.5" width="2.4" height="2.4" fill="#535353" stroke="#b6b6b6" stroke-width="0.9"/><rect x="0.5" y="8.1" width="2.4" height="2.4" fill="#535353" stroke="#b6b6b6" stroke-width="0.9"/><rect x="9.1" y="8.1" width="2.4" height="2.4" fill="#535353" stroke="#b6b6b6" stroke-width="0.9"/></svg>
  <svg style="left:1136.5px;top:540px" width="11" height="12" viewBox="0 0 11 12"><path d="M2.8 0.6 H7 L10.2 3.8 V11.2 H5.6" fill="none" stroke="#b6b6b6" stroke-width="1.1"/><path d="M6.9 0.8 V4 H10" fill="none" stroke="#b6b6b6" stroke-width="0.9"/><path d="M2.8 0.6 V5.6" stroke="#b6b6b6" stroke-width="1.1"/><rect x="0.4" y="6" width="5.2" height="5.6" fill="#b6b6b6"/></svg>
  <div style="left:1164px;top:541px;width:8.4px;height:11.6px;background:#484848;border-radius:2px"></div>
  <div style="left:1164px;top:536.8px;width:8.4px;height:8.4px;background:#9c9c9c;border-radius:50%"></div>
  <div style="left:933px;top:559.3px;width:284.2px;height:1px;background:#474747"></div>
  <!-- blend row -->
  <div style="left:937px;top:565px;width:116.5px;height:21px;background:#4c4c4c;border:1px solid #5a5a5a;border-radius:3px"></div>
  <div class="t" style="left:946px;top:570px;color:#9a9a9a">正常</div>
  <svg style="left:1042px;top:574px" width="8" height="5" viewBox="0 0 8 5"><path d="M0.8 0.8 L4 4 L7.2 0.8" stroke="#686868" stroke-width="1.1" fill="none"/></svg>
  <div class="t" style="left:1061px;top:568px;color:#a4a4a4">不透明度:</div>
  <div style="left:1118.5px;top:565px;width:36.5px;height:17.5px;background:#484848;border:1px solid #5e5e5e;border-radius:2px"></div>
  <div class="t" style="left:1121.5px;top:567px;color:#7c7c7c;letter-spacing:-0.5px">100%</div>
  <div style="left:1156px;top:565px;width:15.6px;height:17.5px;background:#4e4e4e;border:1px solid #5e5e5e;border-radius:2px"></div>
  <svg style="left:1160px;top:572px" width="8" height="5" viewBox="0 0 8 5"><path d="M0.8 0.8 L4 4 L7.2 0.8" stroke="#686868" stroke-width="1.1" fill="none"/></svg>
  <div style="left:933px;top:588px;width:284.2px;height:1px;background:#474747"></div>
  <!-- lock row -->
  <div class="t" style="left:939px;top:597px;color:#a4a4a4">锁定:</div>
  <svg style="left:977px;top:597px" width="12" height="12" viewBox="0 0 12 12"><rect x="0.6" y="0.6" width="10.8" height="10.8" fill="none" stroke="#bcbcbc" stroke-width="1.1"/><rect x="1" y="1" width="3.4" height="3.4" fill="#bcbcbc"/><rect x="7.6" y="1" width="3.4" height="3.4" fill="#bcbcbc"/><rect x="4.4" y="4.4" width="3.2" height="3.2" fill="#bcbcbc"/><rect x="1" y="7.6" width="3.4" height="3.4" fill="#bcbcbc"/><rect x="7.6" y="7.6" width="3.4" height="3.4" fill="#bcbcbc"/></svg>
  <svg style="left:997px;top:596px" width="15" height="15" viewBox="0 0 15 15"><path d="M12.6 0.6 Q14 0.8 13.6 2.2 L8.2 10 L5.6 7.9 Z" fill="#bcbcbc"/><path d="M4.8 8.5 L7.4 10.7 Q7 13.6 3.8 14.2 Q2 14.6 0.6 14.2 Q2.4 13 2.6 11.2 Q2.9 9 4.8 8.5 Z" fill="#bcbcbc"/></svg>
  <svg style="left:1020px;top:597px" width="14" height="14" viewBox="0 0 14 14"><path d="M7 0.4 L9.4 3.2 H4.6 Z M7 13.6 L9.4 10.8 H4.6 Z M0.4 7 L3.2 4.6 V9.4 Z M13.6 7 L10.8 4.6 V9.4 Z" fill="#bcbcbc"/><path d="M7 2.6 V11.4 M2.6 7 H11.4" stroke="#bcbcbc" stroke-width="1.3"/></svg>
  <svg style="left:1041px;top:597px" width="16" height="15" viewBox="0 0 16 15"><path d="M0.6 3.6 H12 V14.6 M3.4 0.6 V11.8 H15.4" fill="none" stroke="#bcbcbc" stroke-width="1.2"/><path d="M12 3.6 L15 0.8" stroke="#bcbcbc" stroke-width="1" stroke-dasharray="1.2 1"/></svg>
  <svg style="left:1065px;top:596px" width="12" height="14" viewBox="0 0 12 14"><path d="M3.2 6 V4 Q3.2 1.2 6 1.2 Q8.8 1.2 8.8 4 V6" fill="none" stroke="#bcbcbc" stroke-width="1.5"/><rect x="0.8" y="5.8" width="10.4" height="7.6" rx="0.8" fill="#bcbcbc"/><rect x="5.2" y="8" width="1.6" height="3" fill="#535353"/></svg>
  <div class="t" style="left:1085px;top:597px;color:#a4a4a4">填充:</div>
  <div style="left:1118.5px;top:594px;width:36.5px;height:17px;background:#484848;border:1px solid #5e5e5e;border-radius:2px"></div>
  <div class="t" style="left:1121.5px;top:595.5px;color:#7c7c7c;letter-spacing:-0.5px">100%</div>
  <div style="left:1156px;top:594px;width:15.6px;height:17px;background:#4e4e4e;border:1px solid #5e5e5e;border-radius:2px"></div>
  <svg style="left:1160px;top:600.5px" width="8" height="5" viewBox="0 0 8 5"><path d="M0.8 0.8 L4 4 L7.2 0.8" stroke="#686868" stroke-width="1.1" fill="none"/></svg>
  <!-- layer list -->
  <div style="left:933px;top:620px;width:284.2px;height:102px;background:#4d4d4d"></div>
  <div style="left:1201px;top:620px;width:16.2px;height:102px;background:#494949"></div>
  <div class="panel" style="left:933px;top:620px;width:30px;height:33px"></div>
  <div style="left:963px;top:620px;width:238px;height:33px;background:#6b6b6b"></div>
  <div style="left:933px;top:653px;width:268px;height:1px;background:#474747"></div>
  <svg style="left:941px;top:631px" width="15" height="11" viewBox="0 0 15 11"><path d="M0.6 5.5 Q3.6 0.8 7.5 0.8 Q11.4 0.8 14.4 5.5 Q11.4 10.2 7.5 10.2 Q3.6 10.2 0.6 5.5 Z" fill="#f0f0f0"/><circle cx="7.5" cy="5.5" r="3" fill="#535353"/><circle cx="7.5" cy="5.5" r="1.6" fill="#f0f0f0"/></svg>
  <div style="left:967px;top:624px;width:32px;height:26px;background:#ffffff;border:1px solid #3c3c3c;border-bottom:none"></div>
  <div class="t" style="left:1008.3px;top:630.8px;color:#ffffff">背景</div>
  <svg style="left:1175px;top:629px" width="11" height="14" viewBox="0 0 11 14"><path d="M3 6 V3.8 Q3 1 5.5 1 Q8 1 8 3.8 V6" fill="none" stroke="#e6e6e6" stroke-width="1.3"/><rect x="1.1" y="5.8" width="8.8" height="7" fill="none" stroke="#e6e6e6" stroke-width="1.4"/><rect x="4.8" y="8" width="1.4" height="2.6" fill="#e6e6e6"/></svg>
  <!-- bottom bar -->
  <div style="left:933px;top:722px;width:284.2px;height:1px;background:#474747"></div>
  <svg style="left:1015px;top:730px" width="14" height="10" viewBox="0 0 14 10"><path d="M5.6 2 H3.8 A2.9 2.9 0 0 0 3.8 7.8 H5.6 M8.4 2 H10.2 A2.9 2.9 0 0 1 10.2 7.8 H8.4 M4 4.9 H10" fill="none" stroke="#8c8c8c" stroke-width="1.4"/></svg>
  <div class="t" style="left:1043px;top:726px;font-size:14px;font-style:italic;color:#8a8a8a;line-height:16px;height:16px;letter-spacing:-0.4px;-webkit-text-stroke:0.3px #8a8a8a">fx</div>
  <div style="left:1055px;top:739px;width:0;height:0;border-left:2px solid transparent;border-right:2px solid transparent;border-top:2px solid #707070"></div>
  <svg style="left:1069px;top:728px" width="13" height="11" viewBox="0 0 13 11"><rect x="0" y="0.4" width="13" height="9.8" fill="#e0e0e0"/><circle cx="6.5" cy="5.3" r="2.9" fill="#4a4a4a"/></svg>
  <svg style="left:1097px;top:728px" width="13" height="13" viewBox="0 0 13 13"><circle cx="6.2" cy="6.2" r="5.2" fill="none" stroke="#e0e0e0" stroke-width="1.3"/><path d="M9.9 2.5 A5.2 5.2 0 0 1 2.5 9.9 Z" fill="#e0e0e0"/></svg>
  <div style="left:1107px;top:741px;width:0;height:0;border-left:2.5px solid transparent;border-right:2.5px solid transparent;border-top:2.5px solid #ffffff"></div>
  <svg style="left:1123px;top:728px" width="14" height="12" viewBox="0 0 14 12"><path d="M0.4 0.6 H5.6 V1.8 H0.4 Z M0.4 2.6 H13.4 V11.2 H0.4 Z" fill="#e0e0e0"/></svg>
  <svg style="left:1151.8px;top:729px" width="11.4" height="11.4" viewBox="0 0 11.4 11.4"><rect x="0.65" y="0.65" width="10.1" height="10.1" fill="none" stroke="#e0e0e0" stroke-width="1.3"/><path d="M5.7 3 V8.4 M3 5.7 H8.4" stroke="#e0e0e0" stroke-width="1.3"/></svg>
  <svg style="left:1178px;top:728px" width="11" height="13" viewBox="0 0 11 13"><path d="M0 2.5 H11 M3.5 2.5 V0.5 H7.5 V2.5 M1.5 3 V12.5 H9.5 V3 M3.5 4.5 V10.5 M5.5 4.5 V10.5 M7.5 4.5 V10.5" fill="none" stroke="#929292" stroke-width="1"/></svg>
</div>

</div></div>
<script>
/* If no CJK font is installed the fallback boxes are narrower than 1em; pad CJK runs so layout keeps its measured widths. */
(function(){try{
  var p=document.createElement('span');
  p.style.cssText='position:absolute;visibility:hidden;font-size:100px;white-space:nowrap;letter-spacing:0';
  p.textContent='\u6587';document.body.appendChild(p);
  var w=p.getBoundingClientRect().width/100;document.body.removeChild(p);
  if(w<0.97){
    var ls=(1-w).toFixed(3)+'em',re=/[\u2E80-\u9FFF\uFF00-\uFFEF]+/g;
    var tw=document.createTreeWalker(document.body,NodeFilter.SHOW_TEXT,null),nodes=[],n;
    while((n=tw.nextNode())){re.lastIndex=0;if(re.test(n.nodeValue))nodes.push(n);}
    nodes.forEach(function(n){
      var f=document.createDocumentFragment(),t=n.nodeValue,last=0,m;re.lastIndex=0;
      while((m=re.exec(t))){
        if(m.index>last)f.appendChild(document.createTextNode(t.slice(last,m.index)));
        var sp=document.createElement('span');sp.style.position='static';sp.style.letterSpacing=ls;sp.textContent=m[0];
        f.appendChild(sp);last=m.index+m[0].length;}
      if(last<t.length)f.appendChild(document.createTextNode(t.slice(last)));
      n.parentNode.replaceChild(f,n);});
  }
}catch(e){}})();
</script>
</body>
</html>
